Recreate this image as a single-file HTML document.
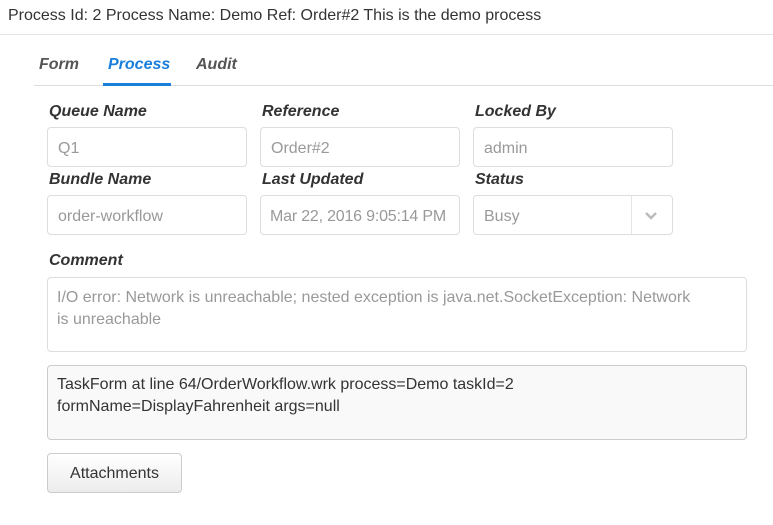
<!DOCTYPE html>
<html><head><meta charset="utf-8"><style>
*{margin:0;padding:0;box-sizing:border-box}
body{width:773px;height:525px;background:#fff;font-family:"Liberation Sans",sans-serif;color:#333;position:relative;overflow:hidden}
.a{position:absolute;white-space:nowrap}
.lbl{font-weight:bold;font-style:italic;font-size:16px;color:#333}
.in{position:absolute;border:1px solid #ddd;border-radius:4px;background:#fff;font-size:16px;color:#999;padding:12px 10px 0;width:200px;height:40px;white-space:nowrap;overflow:hidden}
.tab{font-weight:bold;font-style:italic;font-size:16px;color:#555}
</style></head><body>
<div class="a" style="left:8px;top:7px;font-size:16px;color:#333">Process Id: 2 Process Name: Demo Ref: Order#2 This is the demo process</div>
<div class="a" style="left:0;top:34px;width:773px;height:1px;background:#e5e5e5"></div>
<div class="a tab" style="left:39px;top:56px">Form</div>
<div class="a tab" style="left:108px;top:56px;color:#1a7fdc">Process</div>
<div class="a tab" style="left:196px;top:56px">Audit</div>
<div class="a" style="left:34px;top:85px;width:739px;height:1px;background:#ddd"></div>
<div class="a" style="left:103px;top:83px;width:68px;height:3px;background:#1a7fdc"></div>

<div class="a lbl" style="left:49px;top:103px">Queue Name</div>
<div class="a lbl" style="left:262px;top:103px">Reference</div>
<div class="a lbl" style="left:475px;top:103px">Locked By</div>
<div class="in" style="left:47px;top:127px">Q1</div>
<div class="in" style="left:260px;top:127px">Order#2</div>
<div class="in" style="left:473px;top:127px">admin</div>

<div class="a lbl" style="left:49px;top:171px">Bundle Name</div>
<div class="a lbl" style="left:262px;top:171px">Last Updated</div>
<div class="a lbl" style="left:475px;top:171px">Status</div>
<div class="in" style="left:47px;top:195px">order-workflow</div>
<div class="in" style="left:260px;top:195px;padding-left:9px;letter-spacing:-0.2px">Mar 22, 2016 9:05:14 PM</div>
<div class="in" style="left:473px;top:195px">Busy</div>
<div class="a" style="left:631px;top:196px;width:1px;height:38px;background:#e5e5e5"></div>
<svg class="a" style="left:644px;top:211px" width="14" height="10" viewBox="0 0 14 10"><path d="M2 2 L7 7 L12 2" fill="none" stroke="#bbb" stroke-width="2.5"/></svg>

<div class="a lbl" style="left:49px;top:252px">Comment</div>
<div class="in" style="left:47px;top:277px;width:700px;height:75px;white-space:normal;line-height:22px;padding:9px 9px">I/O error: Network is unreachable; nested exception is java.net.SocketException: Network<br>is unreachable</div>
<div class="in" style="left:47px;top:365px;width:700px;height:75px;white-space:normal;line-height:22px;padding:8px 9px;background:#f9f9f9;border-color:#ccc;color:#333">TaskForm at line 64/OrderWorkflow.wrk process=Demo taskId=2<br>formName=DisplayFahrenheit args=null</div>

<div class="a" style="left:47px;top:453px;width:135px;height:40px;border:1px solid #ccc;border-radius:4px;background:linear-gradient(#fff,#ececec);font-size:16px;color:#333;text-align:center;line-height:39px">Attachments</div>
</body></html>
